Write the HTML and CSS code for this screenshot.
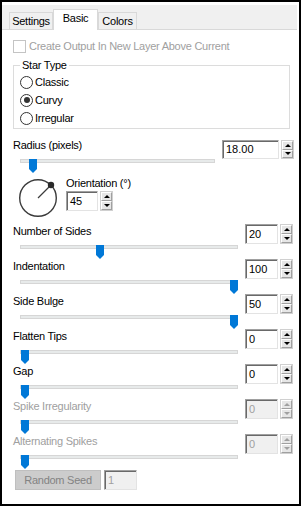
FILE: index.html
```html
<!DOCTYPE html>
<html>
<head>
    <title>Star Shape</title>
    <link rel="stylesheet" href="styles.css">
</head>
<body>
    <div class="window">
        <div class="tabstrip">
            <div class="tab tab-settings">Settings</div>
            <div class="tab tab-basic active">Basic</div>
            <div class="tab tab-colors">Colors</div>
        </div>

        <div class="page">
            <div class="check disabled"><span class="check-box"></span>Create Output In New Layer Above Current</div>

            <fieldset class="group">
                <legend>Star Type</legend>
                <div class="radio"><span class="radio-dot"></span>Classic</div>
                <div class="radio checked"><span class="radio-dot"></span>Curvy</div>
                <div class="radio"><span class="radio-dot"></span>Irregular</div>
            </fieldset>

            <!-- Radius -->
            <div class="row row-radius">
                <div class="row-main">
                    <div class="label">Radius (pixels)</div>
                    <div class="slider">
                        <div class="track"></div>
                        <div class="thumb-lane"><svg class="thumb" style="left: 4.8%" width="8" height="14" viewBox="0 0 8 14"><polygon points="0,0 8,0 8,10 4,14 0,10"/></svg></div>
                    </div>
                </div>
                <div class="spin">
                    <div class="spin-box">18.00</div>
                    <div class="spin-btns"><span class="spin-up"></span><span class="spin-down"></span></div>
                </div>
            </div>

            <!-- Orientation -->
            <div class="orient">
                <svg class="dial" width="40" height="40" viewBox="0 0 40 40">
                    <circle cx="20" cy="20" r="18.3" fill="none" stroke="#3c3c3c" stroke-width="1.4"/>
                    <line x1="20" y1="20" x2="33" y2="7" stroke="#3c3c3c" stroke-width="1.3"/>
                    <circle cx="33" cy="7" r="3.2" fill="#2a2a2a"/>
                </svg>
                <div class="orient-main">
                    <div class="label">Orientation (°)</div>
                    <div class="spin">
                        <div class="spin-box">45</div>
                        <div class="spin-btns"><span class="spin-up"></span><span class="spin-down"></span></div>
                    </div>
                </div>
            </div>

            <div class="row">
                <div class="row-main">
                    <div class="label">Number of Sides</div>
                    <div class="slider">
                        <div class="track"></div>
                        <div class="thumb-lane"><svg class="thumb" style="left: 36.2%" width="8" height="14" viewBox="0 0 8 14"><polygon points="0,0 8,0 8,10 4,14 0,10"/></svg></div>
                    </div>
                </div>
                <div class="spin">
                    <div class="spin-box">20</div>
                    <div class="spin-btns"><span class="spin-up"></span><span class="spin-down"></span></div>
                </div>
            </div>

            <div class="row">
                <div class="row-main">
                    <div class="label">Indentation</div>
                    <div class="slider">
                        <div class="track"></div>
                        <div class="thumb-lane"><svg class="thumb" style="left: 100%" width="8" height="14" viewBox="0 0 8 14"><polygon points="0,0 8,0 8,10 4,14 0,10"/></svg></div>
                    </div>
                </div>
                <div class="spin">
                    <div class="spin-box">100</div>
                    <div class="spin-btns"><span class="spin-up"></span><span class="spin-down"></span></div>
                </div>
            </div>

            <div class="row">
                <div class="row-main">
                    <div class="label">Side Bulge</div>
                    <div class="slider">
                        <div class="track"></div>
                        <div class="thumb-lane"><svg class="thumb" style="left: 100%" width="8" height="14" viewBox="0 0 8 14"><polygon points="0,0 8,0 8,10 4,14 0,10"/></svg></div>
                    </div>
                </div>
                <div class="spin">
                    <div class="spin-box">50</div>
                    <div class="spin-btns"><span class="spin-up"></span><span class="spin-down"></span></div>
                </div>
            </div>

            <div class="row">
                <div class="row-main">
                    <div class="label">Flatten Tips</div>
                    <div class="slider">
                        <div class="track"></div>
                        <div class="thumb-lane"><svg class="thumb" style="left: 0.5%" width="8" height="14" viewBox="0 0 8 14"><polygon points="0,0 8,0 8,10 4,14 0,10"/></svg></div>
                    </div>
                </div>
                <div class="spin">
                    <div class="spin-box">0</div>
                    <div class="spin-btns"><span class="spin-up"></span><span class="spin-down"></span></div>
                </div>
            </div>

            <div class="row">
                <div class="row-main">
                    <div class="label">Gap</div>
                    <div class="slider">
                        <div class="track"></div>
                        <div class="thumb-lane"><svg class="thumb" style="left: 0.5%" width="8" height="14" viewBox="0 0 8 14"><polygon points="0,0 8,0 8,10 4,14 0,10"/></svg></div>
                    </div>
                </div>
                <div class="spin">
                    <div class="spin-box">0</div>
                    <div class="spin-btns"><span class="spin-up"></span><span class="spin-down"></span></div>
                </div>
            </div>

            <div class="row disabled">
                <div class="row-main">
                    <div class="label">Spike Irregularity</div>
                    <div class="slider">
                        <div class="track"></div>
                        <div class="thumb-lane"><svg class="thumb" style="left: 0.5%" width="8" height="14" viewBox="0 0 8 14"><polygon points="0,0 8,0 8,10 4,14 0,10"/></svg></div>
                    </div>
                </div>
                <div class="spin">
                    <div class="spin-box">0</div>
                    <div class="spin-btns"><span class="spin-up"></span><span class="spin-down"></span></div>
                </div>
            </div>

            <div class="row disabled">
                <div class="row-main">
                    <div class="label">Alternating Spikes</div>
                    <div class="slider">
                        <div class="track"></div>
                        <div class="thumb-lane"><svg class="thumb" style="left: 0.5%" width="8" height="14" viewBox="0 0 8 14"><polygon points="0,0 8,0 8,10 4,14 0,10"/></svg></div>
                    </div>
                </div>
                <div class="spin">
                    <div class="spin-box">0</div>
                    <div class="spin-btns"><span class="spin-up"></span><span class="spin-down"></span></div>
                </div>
            </div>

            <div class="seed-row">
                <div class="seed-button">Random Seed</div>
                <div class="seed-box">1</div>
            </div>
        </div>
    </div>
</body>
</html>
```

FILE: styles.css
```css
body {
    margin: 0;
    background-color: #ffffff;
    color: #000000;
    font-family: "Liberation Sans", Arial, sans-serif;
    font-size: 11px;
    letter-spacing: -0.25px;
}

.window {
    width: 301px;
    height: 506px;
    box-sizing: border-box;
    border: 2px solid #000000;
    background-color: #ffffff;
}

/* Tabs */
.tabstrip {
    display: flex;
    align-items: flex-end;
    height: 24px;
    margin: 3px 2px 0 0;
    padding-left: 7px;
    background-color: #f0f0f0;
    border-bottom: 1px solid #d9d9d9;
}

.tab {
    box-sizing: border-box;
    height: 17px;
    line-height: 16px;
    text-align: center;
    background-color: #f0f0f0;
    border: 1px solid #d9d9d9;
    border-bottom: none;
}

.tab-settings { width: 44px; }
.tab-basic { width: 45px; }
.tab-colors { width: 39px; }

.tab.active {
    position: relative;
    height: 21px;
    line-height: 17px;
    margin-bottom: -1px;
    background-color: #ffffff;
}

/* Page */
.page {
    padding: 9px 0 0 11px;
}

.check {
    display: flex;
    align-items: center;
    height: 14px;
}

.check-box {
    width: 13px;
    height: 13px;
    box-sizing: border-box;
    border: 1px solid #c4c4c4;
    margin-right: 3px;
}

.disabled,
.disabled .label {
    color: #a0a0a0;
}

/* Group box */
.group {
    width: 277px;
    box-sizing: border-box;
    margin: 5px 0 0 0;
    padding: 1px 0 1px 6px;
    border: 1px solid #dcdcdc;
}

.group legend {
    padding: 0 2px;
    line-height: 14px;
}

.radio {
    display: flex;
    align-items: center;
    height: 18px;
}

.radio-dot {
    position: relative;
    width: 13px;
    height: 13px;
    box-sizing: border-box;
    border: 1px solid #333333;
    border-radius: 50%;
    margin-right: 2px;
}

.radio.checked .radio-dot::after {
    content: "";
    position: absolute;
    left: 2.5px;
    top: 2.5px;
    width: 6px;
    height: 6px;
    border-radius: 50%;
    background-color: #333333;
}

/* Slider rows */
.row {
    display: flex;
    height: 35px;
}

.row-radius {
    margin-top: 8px;
}

.row-main {
    width: 225px;
}

.row-radius .row-main {
    width: 202px;
}

.label {
    height: 16px;
    line-height: 16px;
}

.slider {
    position: relative;
    height: 14px;
    margin-left: 7px;
}

.track {
    height: 4px;
    margin-top: 6px;
    box-sizing: border-box;
    background-color: #e7eaea;
    border: 1px solid #d6d6d6;
}

.thumb-lane {
    position: absolute;
    top: 0;
    bottom: 0;
    left: 0;
    right: 8px;
}

.thumb {
    position: absolute;
    top: 0;
    fill: #0078d7;
}

/* Spin boxes */
.spin {
    display: flex;
    height: 20px;
    margin: 1px 0 0 7px;
}

.row-radius .spin {
    height: 19px;
    margin-top: 3px;
}

.spin-box {
    width: 33px;
    box-sizing: border-box;
    padding-left: 3px;
    line-height: 18px;
    letter-spacing: 0;
    border: 1px solid;
    border-color: #a0a0a0 #e3e3e3 #e3e3e3 #a0a0a0;
    box-shadow: inset 1px 1px 0 #696969;
    background-color: #ffffff;
}

.row-radius .spin-box {
    width: 57px;
    line-height: 17px;
}

.spin-btns {
    display: flex;
    flex-direction: column;
    width: 13px;
    margin-left: 2px;
    box-sizing: border-box;
    border: 1px solid #d0d0d0;
}

.spin-up,
.spin-down {
    flex: 1;
    display: flex;
    align-items: center;
    justify-content: center;
    background-color: #e6e6e6;
    border: 1px solid;
    border-color: #ffffff #a0a0a0 #a0a0a0 #ffffff;
}

.spin-up::after,
.spin-down::after {
    content: "";
    border-left: 3px solid transparent;
    border-right: 3px solid transparent;
}

.spin-up::after {
    border-bottom: 3px solid #000000;
}

.spin-down::after {
    border-top: 3px solid #000000;
}

.disabled .spin-box {
    background-color: #f0f0f0;
    color: #a0a0a0;
}

.disabled .spin-up::after {
    border-bottom-color: #a0a0a0;
}

.disabled .spin-down::after {
    border-top-color: #a0a0a0;
}

/* Orientation */
.orient {
    display: flex;
    height: 48px;
    margin-top: 3px;
}

.dial {
    margin: 3px 0 0 5px;
}

.orient-main {
    margin-left: 8px;
}

.orient-main .spin {
    margin: 0;
}

.orient-main .spin-box {
    width: 32px;
}

/* Seed */
.seed-row {
    display: flex;
    margin: 2px 0 0 2px;
}

.seed-button {
    width: 86px;
    height: 20px;
    box-sizing: border-box;
    line-height: 18px;
    text-align: center;
    color: #838383;
    background-color: #cccccc;
    border: 1px solid #bfbfbf;
}

.seed-box {
    width: 33px;
    height: 20px;
    margin-left: 3px;
    box-sizing: border-box;
    padding-left: 3px;
    line-height: 18px;
    color: #a0a0a0;
    background-color: #f0f0f0;
    border: 1px solid;
    border-color: #a0a0a0 #e3e3e3 #e3e3e3 #a0a0a0;
    box-shadow: inset 1px 1px 0 #696969;
}
```
